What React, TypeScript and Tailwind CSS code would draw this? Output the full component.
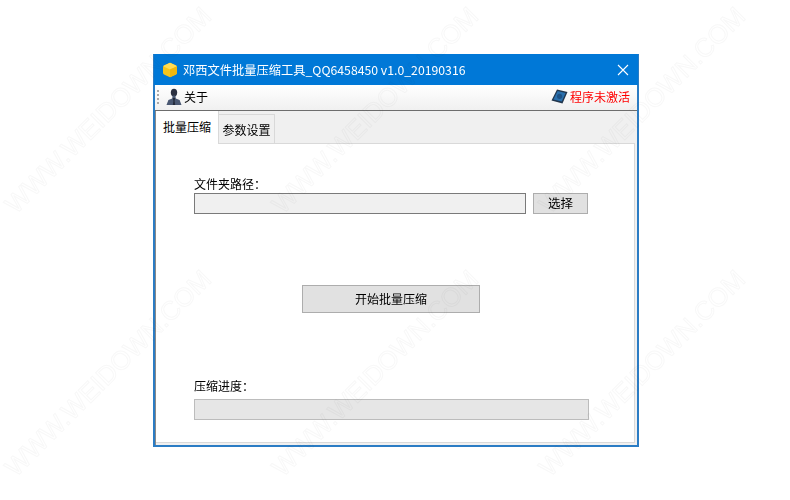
const font = { fontFamily: '"Noto Sans CJK SC", "Liberation Sans", sans-serif' };

// where each watermark's centre sits on the page
const marks = [
  [108, 110], [375, 110], [642, 110],
  [108, 373], [375, 373], [642, 373],
];

function CubeIcon() {
  return (
    <svg width="16" height="16" viewBox="0 0 16 16">
      <path d="M8 0.8 L14 3.6 Q15 4.1 15 5.2 V10.8 Q15 11.9 14 12.4 L8 15.2 L2 12.4 Q1 11.9 1 10.8 V5.2 Q1 4.1 2 3.6 Z" fill="#f6c51c" />
      <path d="M8 0.8 L14 3.6 Q15 4.1 14.4 4.6 L8 7.6 L1.6 4.6 Q1 4.1 2 3.6 Z" fill="#ffdc55" />
      <path d="M8 7.6 L14.6 4.6 Q15 4.8 15 5.2 V10.8 Q15 11.9 14 12.4 L8 15.2 Z" fill="#f0b70e" />
    </svg>
  );
}

function UserIcon() {
  return (
    <svg width="16" height="18" viewBox="0 0 16 18">
      <ellipse cx="8" cy="4.6" rx="3.2" ry="3.9" fill="#2b3040" />
      <path d="M6.6 7.5 H9.4 L9.8 10.4 L13.6 12 L15.5 17 H0.5 L2.4 12 L6.2 10.4 Z" fill="#4a5872" />
      <path d="M6.8 10 H9.2 L8.6 13 L9.2 17 H6.8 L7.4 13 Z" fill="#232a3a" />
    </svg>
  );
}

function KeyBookIcon() {
  return (
    <svg width="17" height="15" viewBox="0 0 17 15">
      <path d="M6 0.5 L16.5 3 L11.5 14.5 L0.5 11.5 Z" fill="#22364c" />
      <path d="M6.6 2 L14.6 4 L10.8 12.6 L2.4 10.4 Z" fill="#2a70ad" />
      <circle cx="8.6" cy="7.3" r="2.6" fill="#1d5285" />
    </svg>
  );
}

export default function App() {
  return (
    <div className="relative w-[790px] h-[500px] overflow-hidden bg-white pt-[54px] pl-[153px] text-black" style={font}>
      {/* Window */}
      <div className="flex flex-col w-[486px] h-[393px] border-x-2 border-b-2 border-[#2b7cc4] border-t border-t-[#0078d7] bg-[#f0f0f0]">
        {/* Title bar */}
        <div className="flex items-center h-[30px] -mx-px bg-[#0078d7] pl-[8px] pr-[9px] shrink-0">
          <CubeIcon />
          <span className="ml-[5px] text-[12.25px] leading-none text-white whitespace-nowrap">邓西文件批量压缩工具_QQ6458450 v1.0_20190316</span>
          <svg className="ml-auto" width="12" height="12" viewBox="0 0 12 12">
            <path d="M1 1 L11 11 M11 1 L1 11" stroke="white" strokeWidth="1.1" />
          </svg>
        </div>

        {/* Toolbar */}
        <div className="flex items-center h-[26px] pl-[2px] pr-[7px] pb-[2px] bg-gradient-to-b from-white to-[#f0f0f0] border-b border-[#6d6d6d] shrink-0">
          <div className="flex flex-col gap-[2px] mr-[7px]">
            <div className="w-[2px] h-[2px] bg-[#a8a8a8]" />
            <div className="w-[2px] h-[2px] bg-[#a8a8a8]" />
            <div className="w-[2px] h-[2px] bg-[#a8a8a8]" />
            <div className="w-[2px] h-[2px] bg-[#a8a8a8]" />
          </div>
          <UserIcon />
          <span className="ml-[2px] text-[12px] leading-none">关于</span>
          <div className="ml-auto flex items-center gap-[2px]">
            <KeyBookIcon />
            <span className="text-[12px] leading-none text-[#ff0000]">程序未激活</span>
          </div>
        </div>

        {/* Tabs + page */}
        <div className="flex flex-col flex-1 min-h-0 border-l border-[#8a8a8a] pr-[2px] pb-[2px]">
          <div className="flex items-end h-[33px] shrink-0">
            <div className="flex items-center justify-center w-[63px] h-[33px] pb-[2px] bg-white text-[12px] border-r border-[#d9d9d9] relative z-10">批量压缩</div>
            <div className="flex items-center justify-center w-[56px] h-[30px] bg-[#f0f0f0] text-[12px] border-t border-r border-[#d9d9d9]">参数设置</div>
          </div>
          <div className="flex flex-1 flex-col bg-white border border-[#d9d9d9] border-l-0 -mt-px pl-[38px] pr-[46px] text-[12px]">
            <div className="mt-[31px] leading-[17px]">文件夹路径：</div>
            <div className="flex gap-[7px] h-[21px] mt-px">
              <div className="w-[332px] bg-[#f0f0f0] border border-[#7a7a7a]" />
              <div className="flex items-center justify-center w-[55px] bg-[#e1e1e1] border border-[#adadad] text-[12.5px]">选择</div>
            </div>
            <div className="self-center flex items-center justify-center w-[178px] h-[28px] mt-[71px] bg-[#e1e1e1] border border-[#adadad]">开始批量压缩</div>
            <div className="mt-[64px] leading-[17px]">压缩进度：</div>
            <div className="w-[395px] h-[21px] mt-[5px] bg-[#e6e6e6] border border-[#bcbcbc]" />
          </div>
        </div>
      </div>

      {/* Watermarks */}
      {marks.map(([x, y]) => (
        <div
          key={`${x}-${y}`}
          className="absolute pointer-events-none whitespace-nowrap text-[26px] leading-none text-transparent -rotate-45 -translate-x-1/2 -translate-y-1/2 mix-blend-multiply [-webkit-text-stroke:1px_#f8f8f8] [font-family:'Liberation_Sans',sans-serif]"
          style={{ left: x, top: y }}
        >
          WWW.WEIDOWN.COM
        </div>
      ))}
    </div>
  );
}
